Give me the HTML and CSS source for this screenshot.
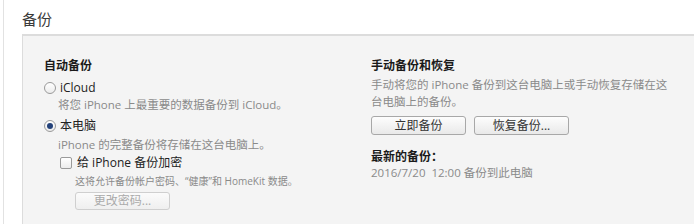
FILE: index.html
```html
<!DOCTYPE html>
<html lang="zh-CN">
<head>
<meta charset="utf-8">
<link rel="stylesheet" href="styles.css">
</head>
<body>
<div class="page">
  <h1 class="title">备份</h1>
  <div class="panel">
    <div class="col left">
      <div class="heading">自动备份</div>
      <div class="option first">
        <span class="radio"></span><span class="label">iCloud</span>
      </div>
      <div class="desc">将您 iPhone 上最重要的数据备份到 iCloud。</div>
      <div class="option second">
        <span class="radio checked"></span><span class="label">本电脑</span>
      </div>
      <div class="desc d2">iPhone 的完整备份将存储在这台电脑上。</div>
      <div class="sub">
        <div class="check-row">
          <span class="checkbox"></span><span class="label">给 iPhone 备份加密</span>
        </div>
        <div class="sub-body">
          <div class="small">这将允许备份帐户密码、“健康”和 HomeKit 数据。</div>
          <button class="btn disabled">更改密码...</button>
        </div>
      </div>
    </div>
    <div class="col right">
      <div class="heading">手动备份和恢复</div>
      <div class="desc rdesc">手动将您的 iPhone 备份到这台电脑上或手动恢复存储在这<br>台电脑上的备份。</div>
      <div class="buttons">
        <button class="btn">立即备份</button>
        <button class="btn">恢复备份...</button>
      </div>
      <div class="heading latest">最新的备份：</div>
      <div class="desc date">2016/7/20&nbsp;&nbsp;12:00 备份到此电脑</div>
    </div>
  </div>
</div>
</body>
</html>
```
FILE: styles.css
```css
html, body {
  margin: 0;
  padding: 0;
  background: #ffffff;
  overflow: hidden;
}
body {
  width: 694px;
  height: 224px;
  font-family: "Open Sans", "Noto Sans CJK SC", sans-serif;
  color: #333;
}
.page {
  margin-left: 3px;
  border-left: 1px solid #e2e2e2;
  height: 224px;
  padding-left: 18px;
  padding-top: 9px;
  box-sizing: border-box;
}
.title {
  margin: 0;
  font-size: 15px;
  line-height: 20px;
  font-weight: normal;
  color: #3a3a3a;
  height: 20px;
  margin-bottom: 5px;
}
.panel {
  display: flex;
  background: #f4f4f4;
  border-top: 2px solid #dcdcdc;
  border-left: 1px solid #dcdcdc;
  height: 200px;
  padding-top: 22px;
  padding-left: 21px;
  box-sizing: border-box;
}
.col.left {
  width: 327px;
}
.col.right {
  flex: 1;
}
.heading {
  font-size: 12px;
  font-weight: bold;
  line-height: 16px;
  color: #1a1a1a;
}
.option {
  display: flex;
  align-items: center;
  height: 16px;
  font-size: 12px;
  color: #222;
}
.option.first { margin-top: 6px; }
.option.second { margin-top: 4px; }
.radio {
  width: 10px;
  height: 10px;
  border: 1px solid #9a9a9a;
  border-radius: 50%;
  background: linear-gradient(#ffffff, #ececec);
  margin-right: 4px;
  position: relative;
  flex: none;
}
.radio.checked::after {
  content: "";
  position: absolute;
  left: 2px;
  top: 2px;
  width: 6px;
  height: 6px;
  border-radius: 50%;
  background: #24427a;
}
.label {
  line-height: 16px;
}
.desc {
  font-size: 11.5px;
  line-height: 18px;
  color: #8a8a8a;
  padding-left: 14px;
}
.desc.d2 { margin-top: 2px; }
.sub {
  padding-left: 16px;
}
.sub-body {
  padding-left: 15px;
}
.check-row {
  display: flex;
  align-items: center;
  height: 16px;
  margin-top: 1px;
  font-size: 12px;
  color: #222;
}
.checkbox {
  width: 10px;
  height: 10px;
  border: 1px solid #9a9a9a;
  border-radius: 2px;
  background: linear-gradient(#ffffff, #ececec);
  margin-right: 5px;
  flex: none;
}
.small {
  font-size: 10px;
  line-height: 16px;
  color: #8a8a8a;
  margin-top: 2px;
}
.btn {
  display: block;
  font-family: inherit;
  width: 95px;
  height: 19px;
  padding: 0;
  margin: 0;
  font-size: 12px;
  line-height: 16px;
  color: #333;
  border: 1px solid #a8a8a8;
  border-radius: 3px;
  background: linear-gradient(#fdfdfd, #e9e9e9);
  box-sizing: border-box;
}
.sub .btn {
  margin-top: 3px;
  height: 18px;
}
.btn.disabled {
  color: #aaaaaa;
  border-color: #cfcfcf;
  background: linear-gradient(#fbfbfb, #efefef);
}
.rdesc {
  padding-left: 0;
  line-height: 17px;
  margin-top: 2px;
}
.buttons {
  display: flex;
  gap: 8px;
  margin-top: 6px;
}
.latest {
  margin-top: 14px;
}
.date {
  padding-left: 0;
  line-height: 16px;
}
```
